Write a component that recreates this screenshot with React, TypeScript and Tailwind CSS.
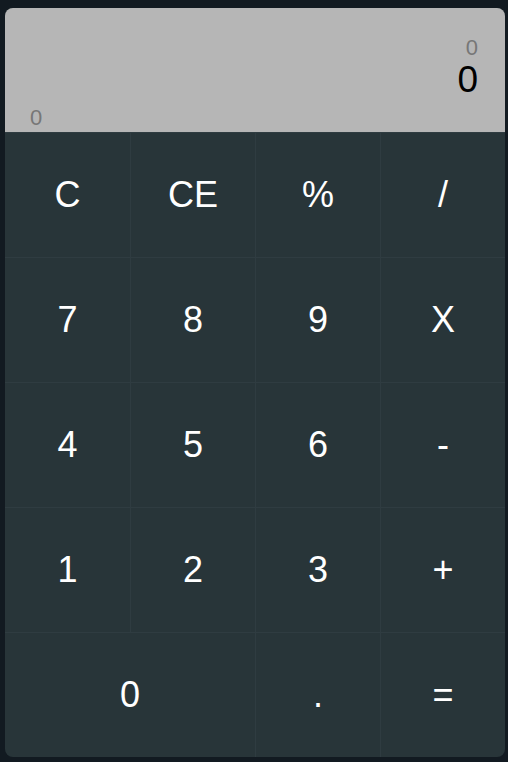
const keys: { label: string; wide?: boolean }[] = [
  { label: "C" },
  { label: "CE" },
  { label: "%" },
  { label: "/" },
  { label: "7" },
  { label: "8" },
  { label: "9" },
  { label: "X" },
  { label: "4" },
  { label: "5" },
  { label: "6" },
  { label: "-" },
  { label: "1" },
  { label: "2" },
  { label: "3" },
  { label: "+" },
  { label: "0", wide: true },
  { label: "." },
  { label: "=" },
];

export default function App() {
  return (
    <div className="min-h-screen bg-[#121a21] px-[5px] pt-[8px] font-['Liberation_Sans',Arial,sans-serif]">
      <div className="w-[500px] overflow-hidden rounded-lg bg-[#283539]">
        <div className="flex h-[124px] flex-col bg-[#b6b6b6] pt-[29px] pr-[27px] pb-[3px] pl-[25px]">
          <div className="text-right text-[22px] leading-none text-[#777777]">0</div>
          <div className="mt-[2px] text-right text-[37px] leading-none text-black">0</div>
          <div className="mt-auto text-[22px] leading-none text-[#777777]">0</div>
        </div>
        <div className="grid grid-cols-4">
          {keys.map((k) => (
            <button
              key={k.label + (k.wide ? "w" : "")}
              type="button"
              className={
                k.wide
                  ? "col-span-2 flex h-[125px] items-center justify-center border-t border-l border-[#2f3c41] text-[36px] text-white [&:nth-child(4n+1)]:border-l-0"
                  : "flex h-[125px] items-center justify-center border-t border-l border-[#2f3c41] text-[36px] text-white [&:nth-child(4n+1)]:border-l-0"
              }
            >
              {k.label}
            </button>
          ))}
        </div>
      </div>
    </div>
  );
}
